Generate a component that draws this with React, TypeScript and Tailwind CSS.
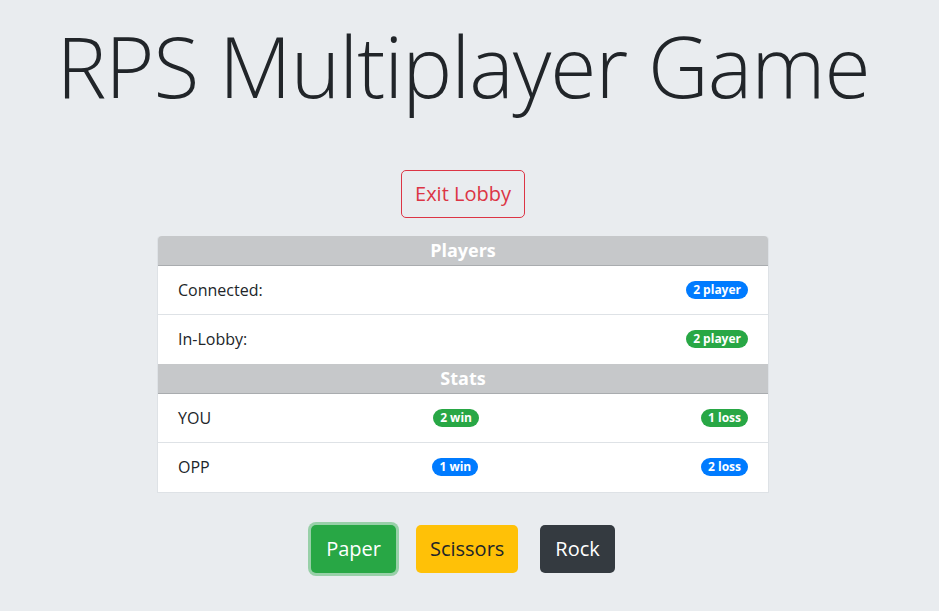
import React from 'react';

const Badge: React.FC<{ tone: 'blue' | 'green'; children: React.ReactNode }> = ({ tone, children }) => (
  <span
    className={`inline-flex items-center h-[18px] px-[7px] rounded-full text-[12px] font-bold leading-none text-white ${
      tone === 'blue' ? 'bg-[#007bff]' : 'bg-[#28a745]'
    }`}
  >
    {children}
  </span>
);

const HeadRow: React.FC<{ title: string; rounded?: boolean }> = ({ title, rounded }) => (
  <div
    className={`h-[30px] flex items-center justify-center bg-[#c6c8ca] border-b border-[#a9acaf] text-white font-bold text-[18px] ${
      rounded ? 'rounded-t-[4px]' : ''
    }`}
  >
    {title}
  </div>
);

const Row: React.FC<{ children: React.ReactNode; last?: boolean }> = ({ children, last }) => (
  <div
    className={`h-[49px] flex items-center justify-between px-5 bg-white text-[16px] text-[#212529] ${
      last ? '' : 'border-b border-[#dee2e6]'
    }`}
  >
    {children}
  </div>
);

export default function App() {
  return (
    <div
      className="min-h-[611px] bg-[#e9ecef] pr-[13px] flex flex-col items-center"
      style={{ fontFamily: '"Open Sans", "Noto Sans", Arial, sans-serif' }}
    >
      {/* title */}
      <h1 className="mt-[16px] text-[84px] font-light leading-[1.2] text-[#212529] tracking-[-1px]">
        RPS Multiplayer Game
      </h1>

      <button className="mt-[53px] h-[48px] px-[13px] rounded-[5px] border border-[#dc3545] text-[#dc3545] text-[20px]">
        Exit Lobby
      </button>

      {/* players + stats table */}
      <div className="mt-[18px] w-[612px] border-x border-b border-[#dee2e6] rounded-t-[4px]">
        <HeadRow title="Players" rounded />
        <Row>
          <span>Connected:</span>
          <Badge tone="blue">2 player</Badge>
        </Row>
        <Row last>
          <span>In-Lobby:</span>
          <Badge tone="green">2 player</Badge>
        </Row>
        <HeadRow title="Stats" />
        <Row>
          <span>YOU</span>
          <Badge tone="green">2 win</Badge>
          <Badge tone="green">1 loss</Badge>
        </Row>
        <Row last>
          <span>OPP</span>
          <Badge tone="blue">1 win</Badge>
          <Badge tone="blue">2 loss</Badge>
        </Row>
      </div>

      {/* moves */}
      <div className="mt-[32px] flex items-center">
        <button className="h-[48px] px-[15px] rounded-[5px] bg-[#28a745] text-white text-[20px] shadow-[0_0_0_3px_rgba(72,180,97,0.5)]">
          Paper
        </button>
        <button className="ml-[20px] h-[48px] px-[14px] rounded-[5px] bg-[#ffc107] text-[#212529] text-[20px]">
          Scissors
        </button>
        <button className="ml-[22px] h-[48px] px-[15px] rounded-[5px] bg-[#343a40] text-white text-[20px]">
          Rock
        </button>
      </div>
    </div>
  );
}
